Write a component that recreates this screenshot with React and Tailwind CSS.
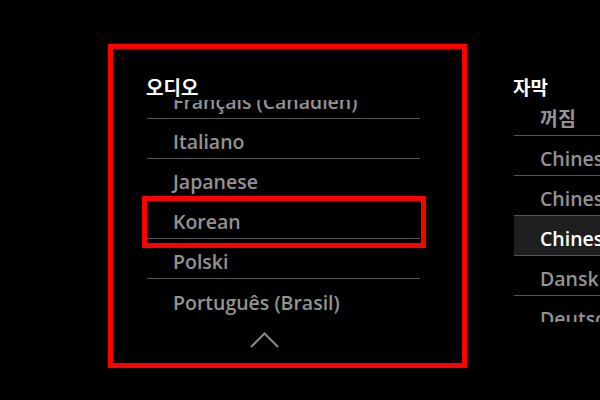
import React from 'react';

const audio = ['Français (Canadien)', 'Italiano', 'Japanese', 'Korean', 'Polski', 'Português (Brasil)'];
const subs = ['꺼짐', 'Chinese (Simplified)', 'Chinese (Traditional)', 'Chinese (Hong Kong)', 'Dansk', 'Deutsch'];

const font = { fontFamily: '"Open Sans", "Noto Sans CJK KR", sans-serif' };

const Row = ({ label, active, last }) => (
  <div
    className={`h-[40px] flex items-center pt-[7px] pl-[26px] text-[19.5px] font-semibold whitespace-nowrap ${last ? '' : 'border-b border-[#555555]'} ${active ? 'bg-[#1f1f1f] text-white' : 'text-[#939393]'}`}
  >
    {label}
  </div>
);

export default function App() {
  return (
    <div className="relative w-[600px] h-[400px] bg-black overflow-hidden" style={font}>
      <div className="flex gap-[93px] pl-[146px] pt-[77px]">
        {/* 오디오 */}
        <div className="w-[274px] shrink-0">
          <h2 className="text-[19px] leading-[23px] font-bold text-white">오디오</h2>
          <div className="h-[222px] overflow-hidden ml-px">
            <div className="-mt-[21px]">
              {audio.map((a, i) => (
                <Row key={a} label={a} last={i === audio.length - 1} />
              ))}
            </div>
          </div>
          <div className="flex pl-[104px] pt-[10px]">
            <svg width="29" height="16" viewBox="0 0 29 16" fill="none">
              <polyline points="1,15 14.5,1.5 28,15" stroke="#8a8a8a" strokeWidth="2" />
            </svg>
          </div>
        </div>

        {/* 자막 */}
        <div className="w-[274px] shrink-0">
          <h2 className="text-[19px] leading-[23px] font-bold text-white">자막</h2>
          <div className="h-[222px] overflow-hidden ml-px">
            <div className="-mt-[4px]">
              {subs.map((s, i) => (
                <Row key={s} label={s} active={i === 3} />
              ))}
            </div>
          </div>
        </div>
      </div>

      {/* annotation boxes */}
      <div className="absolute left-[108px] top-[44px] w-[359px] h-[324px] border-[5px] border-[#ff0000] pointer-events-none" />
      <div className="absolute left-[142px] top-[196px] w-[284px] h-[52px] border-[5px] border-[#ff0000] pointer-events-none" />
    </div>
  );
}
